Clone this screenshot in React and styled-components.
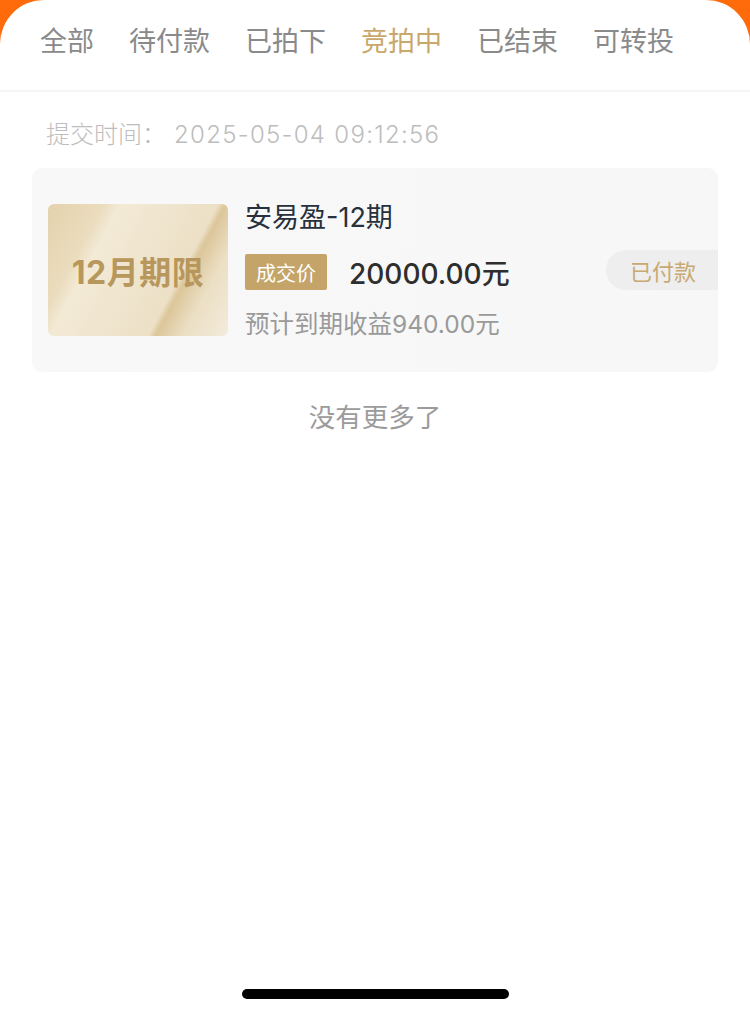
import React from "react";
import styled, { createGlobalStyle } from "styled-components";

const Global = createGlobalStyle`
  html, body { margin: 0; padding: 0; background: #ff6a0a; }
  body { font-family: Inter, "Noto Sans CJK SC", "Noto Sans", sans-serif; }
  * { box-sizing: border-box; }
`;

const Sheet = styled.div`
  width: 750px;
  height: 1014px;
  background: #ffffff;
  border-radius: 44px 44px 0 0;
  display: flex;
  flex-direction: column;
  position: relative;
  overflow: hidden;
`;

const Tabs = styled.div`
  display: flex;
  gap: 35px;
  padding: 0 40px;
  height: 92px;
  align-items: center;
  padding-bottom: 8px;
  border-bottom: 2px solid #f4f4f4;
`;

const Tab = styled.div`
  font-size: 27px;
  line-height: 1;
  color: ${(p) => (p.$active ? "#c9a86c" : "#8a8a8a")};
  white-space: nowrap;
`;

const Time = styled.div`
  font-size: 24px;
  font-weight: 300;
  color: #bdbdbd;
  padding: 23px 0 0 46px;
  line-height: 40px;
  height: 76px;
`;

const Digits = styled.span`
  letter-spacing: 1.3px;
  margin-left: 8px;
`;

const Card = styled.div`
  margin: 0 32px;
  height: 204px;
  background: linear-gradient(90deg, #f8f8f9, #f7f7f7);
  border-radius: 10px;
  display: flex;
  align-items: center;
  padding-left: 16px;
  overflow: hidden;
  position: relative;
`;

const Thumb = styled.div`
  width: 180px;
  height: 132px;
  border-radius: 6px;
  flex-shrink: 0;
  display: flex;
  align-items: center;
  justify-content: center;
  background: linear-gradient(
    118deg,
    #e4d2ac 0%,
    #eadcbd 22%,
    #f3ead6 29%,
    #efe4cd 50%,
    #ece0c6 68%,
    #dcc69a 71%,
    #ebdfc4 82%,
    #f3ebdb 100%
  );
  font-size: 32px;
  font-weight: 700;
  color: #b8975c;
  letter-spacing: 0.5px;
`;

const Info = styled.div`
  display: flex;
  flex-direction: column;
  align-self: flex-start;
  padding-top: 32px;
  margin-left: 17px;
  flex: 1;
`;

const Title = styled.div`
  font-size: 27px;
  color: #27303c;
  line-height: 36px;
  height: 36px;
`;

const PriceRow = styled.div`
  display: flex;
  align-items: center;
  margin-top: 18px;
  height: 36px;
`;

const Badge = styled.div`
  width: 82px;
  height: 36px;
  background: #c4a468;
  color: #fff;
  font-size: 20px;
  display: flex;
  align-items: center;
  justify-content: center;
  border-radius: 2px;
`;

const Price = styled.div`
  margin-left: 22px;
  font-size: 28px;
  font-weight: 500;
  color: #2e2e2e;
`;

const Expect = styled.div`
  font-size: 24.5px;
  color: #9a9a9a;
  margin-top: 17px;
  line-height: 34px;
`;

const More = styled.div`
  text-align: center;
  font-size: 26.5px;
  color: #9b9b9b;
  margin-top: 26px;
  line-height: 38px;
`;

const Status = styled.div`
  position: absolute;
  right: 0;
  top: 82px;
  width: 112px;
  height: 40px;
  background: #eeeeee;
  border-radius: 20px 0 0 20px;
  color: #c9a972;
  font-size: 22px;
  display: flex;
  align-items: center;
  padding-left: 24px;
`;

const Spacer = styled.div`
  flex: 1;
`;

const HomeBar = styled.div`
  width: 267px;
  height: 10px;
  border-radius: 5px;
  background: #000;
  align-self: center;
  margin-bottom: 15px;
`;

const tabs = ["全部", "待付款", "已拍下", "竞拍中", "已结束", "可转投"];

export default function App() {
  return (
    <>
      <Global />
      <Sheet>
        <Tabs>
          {tabs.map((t) => (
            <Tab key={t} $active={t === "竞拍中"}>
              {t}
            </Tab>
          ))}
        </Tabs>
        <Time>
          提交时间：<Digits>2025-05-04 09:12:56</Digits>
        </Time>
        <Card>
          <Thumb>12月期限</Thumb>
          <Info>
            <Title>安易盈-12期</Title>
            <PriceRow>
              <Badge>成交价</Badge>
              <Price>20000.00元</Price>
            </PriceRow>
            <Expect>预计到期收益940.00元</Expect>
          </Info>
          <Status>已付款</Status>
        </Card>
        <More>没有更多了</More>
        <Spacer />
        <HomeBar />
      </Sheet>
    </>
  );
}
